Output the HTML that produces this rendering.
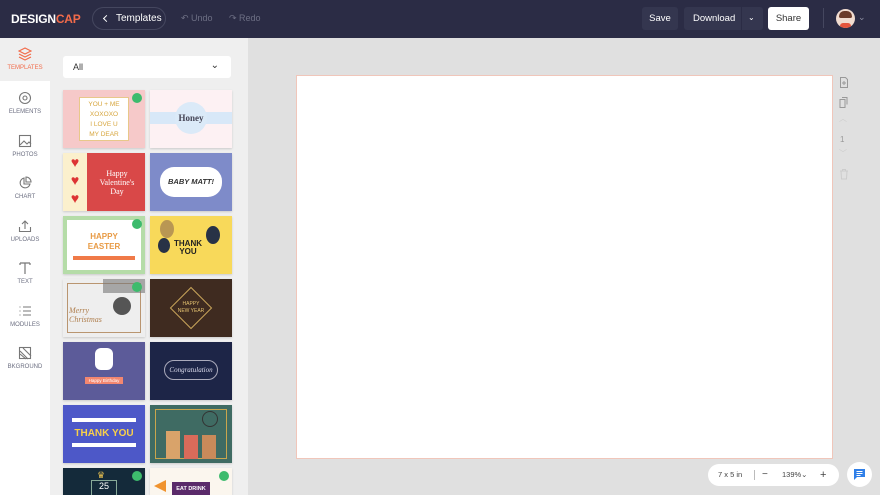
<!DOCTYPE html>
<html><head><meta charset="utf-8"><style>
*{margin:0;padding:0;box-sizing:border-box}
html,body{width:880px;height:495px;overflow:hidden}
body{font-family:"Liberation Sans",sans-serif;background:#e0e0e0;position:relative}
.hdr{position:absolute;left:0;top:0;width:880px;height:38px;background:#2b2c45}
.logo{position:absolute;left:11px;top:12px;color:#fff;font-weight:bold;font-size:12px;letter-spacing:-.2px}
.logo span{color:#f36b4a}
.tpl{position:absolute;left:92px;top:7px;width:74px;height:23px;border:1px solid #45475f;border-radius:12px;color:#fff;font-size:10px;line-height:21px;padding-left:23px}
.tpl:before{content:"";position:absolute;left:11px;top:8px;width:4px;height:4px;border-left:1.5px solid #fff;border-bottom:1.5px solid #fff;transform:rotate(45deg)}
.ur{position:absolute;top:13px;font-size:9px;color:#6d6f84}
.btn{position:absolute;top:7px;height:23px;border-radius:3px;background:#34364f;color:#fff;font-size:9.5px;line-height:23px;text-align:center}
.side{position:absolute;left:0;top:38px;width:50px;height:457px;background:#fff}
.side .it{position:absolute;left:0;width:50px;text-align:center;font-size:6px;color:#6b6e80}
.side svg{display:block;margin:0 auto 4px}
.panel{position:absolute;left:50px;top:38px;width:198px;height:457px;background:#efefef;overflow:hidden}
.sel{position:absolute;left:13px;top:18px;width:168px;height:22px;background:#fff;border-radius:3px;font-size:9px;line-height:22px;padding-left:10px;color:#333}
.card{position:absolute;width:82px;height:58px;overflow:hidden;box-shadow:0 1px 2px rgba(0,0,0,.15);font-size:7px;text-align:center}
.gem{position:absolute;right:3px;top:3px;width:10px;height:10px;border-radius:50%;background:#3dbb6d}
.page{position:absolute;left:296px;top:75px;width:537px;height:384px;background:#fff;border:1px solid #f0c6ba}
.zoom{position:absolute;left:708px;top:464px;width:131px;height:22px;background:#fff;border-radius:11px;font-size:7.5px;color:#444;line-height:22px}
.chat{position:absolute;left:847px;top:462px;width:25px;height:25px;border-radius:50%;background:#fff}
.ri{position:absolute;left:839px;font-size:8px;color:#999}
</style></head><body>
<div class="hdr">
<div class="logo">DESIGN<span>CAP</span></div>
<div class="tpl">Templates</div>
<div class="ur" style="left:181px">↶ Undo</div>
<div class="ur" style="left:229px">↷ Redo</div>
<div class="btn" style="left:642px;width:36px">Save</div>
<div class="btn" style="left:684px;width:79px;text-align:left;padding-left:9px">Download<span style="position:absolute;left:57px;top:0;width:1px;height:23px;background:#2b2c45"></span><span style="position:absolute;left:64px;top:-1px;font-size:8px">⌄</span></div>
<div class="btn" style="left:768px;width:41px;background:#fff;color:#333">Share</div>
<div style="position:absolute;left:823px;top:8px;width:1px;height:20px;background:#45475f"></div>
<div style="position:absolute;left:836px;top:9px;width:19px;height:19px;border-radius:50%;background:#f1dcd0;overflow:hidden"><div style="position:absolute;left:3px;top:2px;width:13px;height:7px;background:#6b3b2a;border-radius:6px 6px 2px 2px"></div><div style="position:absolute;left:4px;top:14px;width:11px;height:6px;background:#e5553d;border-radius:4px"></div></div>
<div style="position:absolute;left:858px;top:12px;color:#8d8fa2;font-size:9px">⌄</div>
</div>
<div class="side">
<div style="position:absolute;left:0;top:0;width:50px;height:43px;background:#efefef"></div>
<div class="it" style="top:9px;color:#f26b4a"><svg width="14" height="14" viewBox="0 0 14 14" fill="none" stroke="#f26b4a" stroke-width="1.2"><path d="M7 1L13 4 7 7 1 4Z M1 7l6 3 6-3 M1 10l6 3 6-3"/></svg>TEMPLATES</div>
<div class="it" style="top:53px"><svg width="14" height="14" viewBox="0 0 14 14" fill="none" stroke="#777" stroke-width="1.1"><circle cx="7" cy="7" r="5.5"/><circle cx="7" cy="7" r="2"/></svg>ELEMENTS</div>
<div class="it" style="top:96px"><svg width="14" height="14" viewBox="0 0 14 14" fill="none" stroke="#777" stroke-width="1.1"><rect x="1.5" y="1.5" width="11" height="11"/><path d="M2 11l4-4 3 3 2-2 2 2"/></svg>PHOTOS</div>
<div class="it" style="top:138px"><svg width="14" height="14" viewBox="0 0 14 14" fill="none" stroke="#777" stroke-width="1.1"><path d="M6 2a5 5 0 1 0 6 6H6Z M8 1v5h5a5 5 0 0 0-5-5Z"/></svg>CHART</div>
<div class="it" style="top:181px"><svg width="14" height="14" viewBox="0 0 14 14" fill="none" stroke="#777" stroke-width="1.1"><path d="M7 10V2M4 5l3-3 3 3M1.5 8v4.5h11V8"/></svg>UPLOADS</div>
<div class="it" style="top:223px"><svg width="14" height="14" viewBox="0 0 14 14" fill="none" stroke="#777" stroke-width="1.2"><path d="M2 2h10M7 2v11M2 2v2M12 2v2"/></svg>TEXT</div>
<div class="it" style="top:266px"><svg width="14" height="14" viewBox="0 0 14 14" fill="none" stroke="#777" stroke-width="1.1"><path d="M5 3h8M5 7h8M5 11h8M1.5 3h1M1.5 7h1M1.5 11h1"/></svg>MODULES</div>
<div class="it" style="top:308px"><svg width="14" height="14" viewBox="0 0 14 14" fill="none" stroke="#777" stroke-width="1.1"><rect x="1.5" y="1.5" width="11" height="11"/><path d="M2 8l6 5M2 5l8 8M5 2l8 8"/></svg>BKGROUND</div>
</div>
<div class="panel">
<div class="sel">All<span style="position:absolute;right:12px;top:-1px;font-size:10px">⌄</span></div>
<div class="card" style="left:13px;top:52px;background:#f6c9c9"><div style="margin:7px auto;width:50px;height:44px;background:#fff;border:1px solid #e8c88a;color:#d7a63e;font-size:6.5px;line-height:10px;padding-top:2px">YOU + ME<br>XOXOXO<br>I LOVE U<br>MY DEAR</div><div class="gem"></div></div>
<div class="card" style="left:100px;top:52px;background:#fdf1f3"><div style="position:absolute;left:0;top:22px;width:82px;height:12px;background:#d8e8f8"></div><div style="position:absolute;left:25px;top:12px;width:32px;height:32px;border-radius:50%;background:#dbeaf8;font:bold 9px 'Liberation Serif';line-height:32px;color:#445">Honey</div></div>
<div class="card" style="left:13px;top:115px;background:#d94848"><div style="position:absolute;left:0;top:0;width:24px;height:58px;background:#fbf0cd;color:#d33;font-size:14px;line-height:18px">♥<br>♥<br>♥</div><div style="position:absolute;left:26px;top:16px;width:56px;color:#fff;font:8px 'Liberation Serif';line-height:9px">Happy<br>Valentine's<br>Day</div></div>
<div class="card" style="left:100px;top:115px;background:#7e8bc9"><div style="position:absolute;left:10px;top:14px;width:62px;height:30px;border-radius:14px;background:#fff;font:bold italic 7.5px 'Liberation Sans';line-height:30px;color:#333">BABY MATT!</div></div>
<div class="card" style="left:13px;top:178px;background:#b5dca8"><div style="position:absolute;left:4px;top:4px;width:74px;height:50px;background:#fff"><div style="margin-top:12px;color:#e89a44;font-weight:bold;font-size:8px;line-height:10px">HAPPY<br>EASTER</div><div style="margin:4px 6px;height:4px;background:#f07a48"></div></div><div class="gem"></div></div>
<div class="card" style="left:100px;top:178px;background:#f8d95a"><div style="position:absolute;left:10px;top:4px;width:14px;height:18px;border-radius:50%;background:#b99753"></div><div style="position:absolute;left:56px;top:10px;width:14px;height:18px;border-radius:50%;background:#283246"></div><div style="position:absolute;left:8px;top:22px;width:12px;height:15px;border-radius:50%;background:#283246"></div><div style="position:absolute;left:24px;top:24px;font-weight:bold;font-size:8px;line-height:8px;color:#222">THANK<br>YOU</div></div>
<div class="card" style="left:13px;top:241px;background:#eeeeee"><div style="position:absolute;left:4px;top:4px;width:74px;height:50px;border:1.5px solid #b99570"></div><div style="position:absolute;left:6px;top:27px;font:italic 8px 'Liberation Serif';color:#b08050;text-align:left;line-height:9px">Merry<br>Christmas</div><div style="position:absolute;left:50px;top:18px;width:18px;height:18px;border-radius:50%;background:#555"></div><div style="position:absolute;left:40px;top:0;width:42px;height:14px;background:#777;opacity:.6"></div><div class="gem"></div></div>
<div class="card" style="left:100px;top:241px;background:#3f2b20"><div style="position:absolute;left:26px;top:14px;width:30px;height:30px;border:1px solid #c9a55a;transform:rotate(45deg)"></div><div style="position:absolute;left:0;width:82px;top:22px;color:#e4c270;font-size:5px;line-height:7px">HAPPY<br>NEW YEAR</div></div>
<div class="card" style="left:13px;top:304px;background:#5c5b99"><div style="position:absolute;left:32px;top:6px;width:18px;height:22px;background:#fff;border-radius:6px"></div><div style="position:absolute;left:22px;top:35px;width:38px;height:7px;background:#f38770;font-size:4.5px;color:#fff;line-height:7px">Happy Birthday</div></div>
<div class="card" style="left:100px;top:304px;background:#1d2547"><div style="position:absolute;left:14px;top:18px;width:54px;height:20px;border:1px solid #aab;border-radius:10px;color:#dde;font:italic 7px 'Liberation Serif';line-height:18px">Congratulation</div></div>
<div class="card" style="left:13px;top:367px;background:#4d58c8"><div style="position:absolute;left:9px;top:13px;width:64px;height:4px;background:#fff"></div><div style="position:absolute;left:0;width:82px;top:23px;color:#f8d04a;font-weight:bold;font-size:10px">THANK YOU</div><div style="position:absolute;left:9px;top:38px;width:64px;height:4px;background:#fff"></div></div>
<div class="card" style="left:100px;top:367px;background:#3f6b63"><div style="position:absolute;left:5px;top:4px;width:72px;height:50px;border:1px solid #c9a64d"></div><div style="position:absolute;left:16px;top:26px;width:14px;height:28px;background:#d9a36a"></div><div style="position:absolute;left:34px;top:30px;width:14px;height:24px;background:#d96b5a"></div><div style="position:absolute;left:52px;top:30px;width:14px;height:24px;background:#c98a5a"></div><div style="position:absolute;left:52px;top:6px;width:16px;height:16px;border-radius:50%;border:1px solid #333"></div></div>
<div class="card" style="left:13px;top:430px;height:27px;background:#142a3a"><div style="position:absolute;left:28px;top:12px;width:26px;height:16px;border:1px solid #8a9;color:#fff;font-size:9px">25</div><div style="position:absolute;left:34px;top:2px;color:#e8c050;font-size:9px">♛</div><div class="gem"></div></div>
<div class="card" style="left:100px;top:430px;height:27px;background:#fbf6ee"><div style="position:absolute;left:22px;top:14px;width:38px;height:13px;background:#5a2a6a;color:#fff;font-size:5.5px;line-height:14px;font-weight:bold">EAT DRINK</div><div style="position:absolute;left:4px;top:12px;width:0;height:0;border-right:12px solid #f0932e;border-top:6px solid transparent;border-bottom:6px solid transparent"></div><div class="gem"></div></div>
</div>

<div class="page"></div>
<svg class="ri" style="top:77px" width="10" height="11" viewBox="0 0 10 11" fill="none" stroke="#999"><path d="M1.5 .5h5l2 2v8h-7z M5 4v4M3 6h4"/></svg>
<svg class="ri" style="top:97px" width="10" height="11" viewBox="0 0 10 11" fill="none" stroke="#999"><path d="M1 2.5h5v8H1z M3 .5h5v7"/></svg>
<div class="ri" style="top:113px;color:#ccc">︿</div>
<div class="ri" style="top:135px;left:840px">1</div>
<div class="ri" style="top:148px;color:#ccc">﹀</div>
<svg class="ri" style="top:169px" width="10" height="11" viewBox="0 0 10 11" fill="none" stroke="#ccc"><path d="M1 2h8M3.5 2V.5h3V2M2 2l.5 8h5L8 2"/></svg>
<div class="zoom"><span style="position:absolute;left:10px">7 x 5 in</span><span style="position:absolute;left:46px;top:6px;width:1px;height:10px;background:#bbb"></span><span style="position:absolute;left:54px;font-size:10px">−</span><span style="position:absolute;left:74px">139%⌄</span><span style="position:absolute;left:112px;font-size:11px">+</span></div>
<div class="chat"><svg style="position:absolute;left:6px;top:6px" width="13" height="13" viewBox="0 0 13 13"><path d="M1 1h11v8H4l-3 3z" fill="#2f7fe8"/><path d="M3.5 3.5h6M3.5 5.5h6M3.5 7.5h4" stroke="#fff" stroke-width=".9"/></svg></div>
</body></html>
